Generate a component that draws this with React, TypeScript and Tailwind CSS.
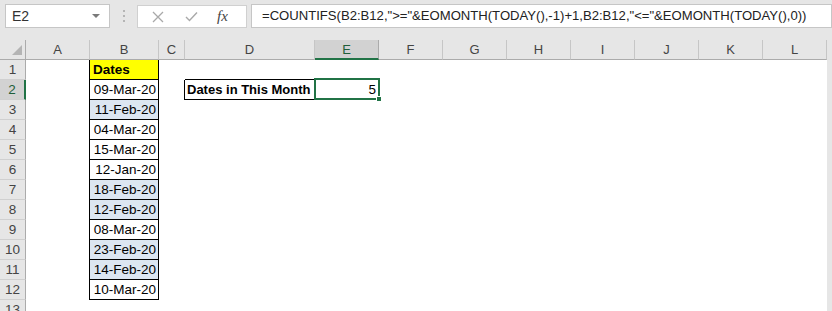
import React from 'react';

const columns = ['A', 'B', 'C', 'D', 'E', 'F', 'G', 'H', 'I', 'J', 'K', 'L', 'M'];

const dates = [
  { text: '09-Mar-20', feb: false },
  { text: '11-Feb-20', feb: true },
  { text: '04-Mar-20', feb: false },
  { text: '15-Mar-20', feb: false },
  { text: '12-Jan-20', feb: false },
  { text: '18-Feb-20', feb: true },
  { text: '12-Feb-20', feb: true },
  { text: '08-Mar-20', feb: false },
  { text: '23-Feb-20', feb: true },
  { text: '14-Feb-20', feb: true },
  { text: '10-Mar-20', feb: false },
];

const formula = '=COUNTIFS(B2:B12,">="&EOMONTH(TODAY(),-1)+1,B2:B12,"<="&EOMONTH(TODAY(),0))';

// fixed 20px rows so cell borders don't get pushed under the next row
const gridCols = 'grid h-[20px] grid-rows-[20px] leading-none grid-cols-[26px_64px_69px_26px_130px_64px_64px_64px_64px_64px_64px_64px_64px]';

function FormulaBar() {
  return (
    <div className="flex h-[40px] items-start pt-[4px] pl-[5px]">
      <div className="flex h-[24px] w-[105px] items-center justify-between border border-[#c6c6c6] bg-white pl-[6px] pr-[9px]">
        <span className="text-[14px] text-[#333]">E2</span>
        <div className="h-0 w-0 border-x-[4px] border-t-[4px] border-x-transparent border-t-[#7a7a7a]" />
      </div>
      <div className="flex h-[24px] w-[27px] flex-col items-center justify-center gap-[3px]">
        <div className="h-[2px] w-[2px] bg-[#b5b5b5]" />
        <div className="h-[2px] w-[2px] bg-[#b5b5b5]" />
        <div className="h-[2px] w-[2px] bg-[#b5b5b5]" />
      </div>
      <div className="mt-px flex h-[23px] w-[110px] items-center border border-[#d0d0d0] bg-white">
        <svg width="12" height="12" viewBox="0 0 12 12" className="ml-[14px]">
          <path d="M1 1L11 11M11 1L1 11" stroke="#a9a9a9" strokeWidth="1.3" fill="none" />
        </svg>
        <svg width="13" height="11" viewBox="0 0 13 11" className="ml-[21px]">
          <path d="M1 6L4.5 9.5L12 1.5" stroke="#a9a9a9" strokeWidth="1.4" fill="none" />
        </svg>
        <span className="ml-[19px] font-['Liberation_Serif',serif] text-[15px] italic text-[#444]">fx</span>
      </div>
      <div className="ml-[4px] flex h-[24px] flex-1 items-center border border-[#c6c6c6] bg-white pl-[10px]">
        <span className="whitespace-nowrap text-[13.1px] text-[#222]">{formula}</span>
      </div>
    </div>
  );
}

function HeaderRow() {
  return (
    <div className={gridCols}>
      <div className="relative border-r border-b border-[#ababab] bg-[#e6e6e6]">
        <div className="absolute right-[3px] bottom-[4px] h-0 w-0 border-b-[10px] border-l-[10px] border-b-[#b4b4b4] border-l-transparent" />
      </div>
      {columns.map(c =>
        c === 'E' ? (
          <div key={c} className="flex items-center justify-center border-r border-b-2 border-r-[#ababab] border-b-[#217346] bg-[#d2d2d2] text-[13px] text-[#1f5f3a]">
            {c}
          </div>
        ) : (
          <div key={c} className="flex items-center justify-center border-r border-b border-r-[#c6c6c6] border-b-[#ababab] bg-[#e6e6e6] text-[13px] text-[#444]">
            {c}
          </div>
        )
      )}
    </div>
  );
}

function RowHeader({ n }: { n: number }) {
  if (n === 2) {
    return (
      <div className="flex items-center justify-center border-r-2 border-b border-r-[#217346] border-b-[#d0d0d0] bg-[#d2d2d2] text-[13.5px] text-[#1f5f3a]">
        {n}
      </div>
    );
  }
  return (
    <div className="flex items-center justify-center border-r border-b border-r-[#ababab] border-b-[#d0d0d0] bg-[#e6e6e6] text-[13.5px] text-[#444]">
      {n}
    </div>
  );
}

function DataRow({ n }: { n: number }) {
  const inTable = n <= 12;
  const date = n >= 2 && n <= 12 ? dates[n - 2] : null;

  let bCell: React.ReactNode = <div className="bg-white" />;
  if (n === 1) {
    bCell = (
      <div className="flex items-center border-r border-b border-black bg-[#ffff00] pl-[3px] text-[13.5px] font-bold text-black">
        Dates
      </div>
    );
  } else if (date) {
    bCell = (
      <div className={`flex items-center justify-end border-r border-b border-black pr-[2px] text-[13.5px] text-black ${date.feb ? 'bg-[#dce6f1]' : 'bg-white'}`}>
        {date.text}
      </div>
    );
  }

  let dCell: React.ReactNode = <div className="bg-white" />;
  if (n === 1) {
    dCell = <div className="border-b border-black bg-white" />;
  } else if (n === 2) {
    dCell = (
      <div className="flex items-center border-r border-b border-black bg-white pl-[2px] text-[13px] font-bold text-black">
        Dates in This Month
      </div>
    );
  }

  return (
    <div className={gridCols}>
      <RowHeader n={n} />
      <div className={inTable ? 'border-r border-black bg-white' : 'bg-white'} />
      {bCell}
      <div className={n === 2 ? 'border-r border-black bg-white' : 'bg-white'} />
      {dCell}
      {n === 2 ? (
        <div className="relative z-10 flex items-center justify-end bg-white pr-[3px] text-[13.5px] text-black">
          5
          <div className="absolute -top-[2px] -left-[1px] h-[22px] w-[66px] border-2 border-[#217346]" />
          <div className="absolute -right-[3px] -bottom-[2px] h-[6px] w-[6px] border border-white bg-[#217346]" />
        </div>
      ) : (
        <div className="bg-white" />
      )}
      {columns.slice(5, 12).map(c => (
        <div key={c} className="bg-white" />
      ))}
    </div>
  );
}

export default function App() {
  return (
    <div className="h-[311px] w-[832px] overflow-hidden bg-[#e6e6e6] font-['Liberation_Sans',Arial,sans-serif]">
      <FormulaBar />
      <HeaderRow />
      {Array.from({ length: 13 }, (_, i) => (
        <DataRow key={i + 1} n={i + 1} />
      ))}
    </div>
  );
}
